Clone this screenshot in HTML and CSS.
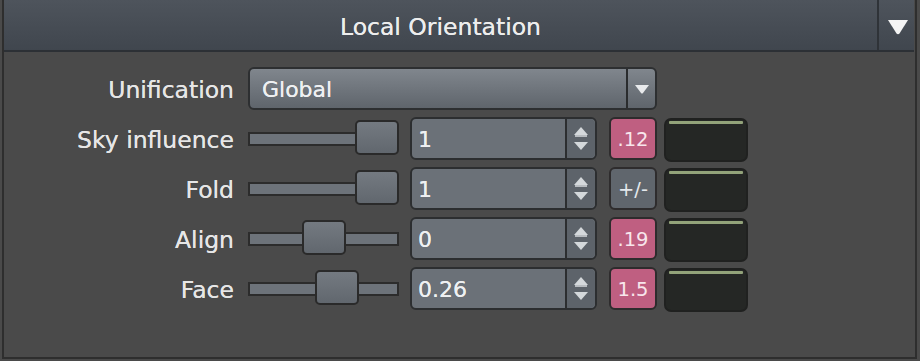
FILE: index.html
```html
<!DOCTYPE html>
<html>
<head>
<meta charset="utf-8">
<link rel="stylesheet" href="styles.css">
</head>
<body>
<div class="panel">
  <div class="header">
    <div class="title">Local Orientation</div>
    <div class="hdr-arrow"><svg width="22" height="16" viewBox="0 0 22 16"><path d="M1 1 H21 L12.5 14.5 Q11 16 9.5 14.5 Z" fill="#f4f4f4"/></svg></div>
  </div>
  <div class="rows">
    <div class="row">
      <div class="label">Unification</div>
      <div class="dropdown">
        <div class="dd-value">Global</div>
        <div class="dd-arrow"><svg width="16" height="10" viewBox="0 0 16 10"><path d="M1 1 H15 L9 9 Q8 10 7 9 Z" fill="#e8eaec"/></svg></div>
      </div>
    </div>

    <div class="row">
      <div class="label">Sky influence</div>
      <div class="controls">
        <div class="slider"><div class="track"></div><div class="handle" style="left:107px"></div></div>
        <div class="num"><div class="num-value">1</div><div class="spin"><span class="up"></span><span class="dn"></span></div></div>
        <div class="btn pink">.12</div>
        <div class="swatch"><div class="swatch-line"></div></div>
      </div>
    </div>

    <div class="row">
      <div class="label">Fold</div>
      <div class="controls">
        <div class="slider"><div class="track"></div><div class="handle" style="left:107px"></div></div>
        <div class="num"><div class="num-value">1</div><div class="spin"><span class="up"></span><span class="dn"></span></div></div>
        <div class="btn grey">+/-</div>
        <div class="swatch"><div class="swatch-line"></div></div>
      </div>
    </div>

    <div class="row">
      <div class="label">Align</div>
      <div class="controls">
        <div class="slider"><div class="track"></div><div class="handle" style="left:54px"></div></div>
        <div class="num"><div class="num-value">0</div><div class="spin"><span class="up"></span><span class="dn"></span></div></div>
        <div class="btn pink">.19</div>
        <div class="swatch"><div class="swatch-line"></div></div>
      </div>
    </div>

    <div class="row">
      <div class="label">Face</div>
      <div class="controls">
        <div class="slider"><div class="track"></div><div class="handle" style="left:67px"></div></div>
        <div class="num"><div class="num-value">0.26</div><div class="spin"><span class="up"></span><span class="dn"></span></div></div>
        <div class="btn pink">1.5</div>
        <div class="swatch"><div class="swatch-line"></div></div>
      </div>
    </div>
  </div>
</div>
</body>
</html>
```

FILE: styles.css
```css
html, body {
  margin: 0;
  padding: 0;
  background: #4a4a4a;
  width: 920px;
  height: 361px;
  overflow: hidden;
  font-family: "DejaVu Sans", sans-serif;
}

.panel {
  margin-left: 2px;
  width: 911px;
  height: 357px;
  border-left: 2px solid #2e2e2e;
  border-right: 2px solid #2e2e2e;
  border-bottom: 2px solid #2e2e2e;
  background: #4a4a4a;
  display: flex;
  flex-direction: column;
}

.header {
  height: 50px;
  width: 910px;
  border-bottom: 2px solid #2c3035;
  background: linear-gradient(#4e545c, #40464e);
  display: flex;
}

.title {
  flex: 1;
  display: flex;
  align-items: center;
  justify-content: center;
  color: #ededed;
  font-size: 23.5px;
  padding-top: 4px;
  border-right: 2px solid #2f3338;
  text-shadow: 0 0 0.6px #ededed;
}

.hdr-arrow {
  width: 32px;
  display: flex;
  align-items: center;
  justify-content: center;
  padding-top: 3px;
  padding-left: 3px;
}

.rows {
  padding-top: 15px;
  display: flex;
  flex-direction: column;
  gap: 7px;
}

.row {
  display: flex;
  align-items: center;
  height: 43px;
  gap: 14px;
}

.label {
  width: 230px;
  text-align: right;
  color: #e6e6e6;
  font-size: 23.5px;
  padding-top: 2px;
  text-shadow: 0 0 0.6px #e6e6e6;
}

.dropdown {
  width: 409px;
  height: 43px;
  box-sizing: border-box;
  border: 2px solid #2d2f31;
  border-radius: 6px;
  background: linear-gradient(#80868d, #5f656c);
  display: flex;
}

.dd-value {
  flex: 1;
  color: #eef0f2;
  font-size: 22px;
  padding-left: 12px;
  display: flex;
  align-items: center;
  padding-top: 1px;
  border-right: 2px solid #2a2c2e;
  text-shadow: 0 0 0.6px #eef0f2;
}

.dd-arrow {
  width: 27px;
  display: flex;
  align-items: center;
  justify-content: center;
}

.controls {
  display: flex;
  align-items: center;
  height: 43px;
}

.slider {
  position: relative;
  width: 151px;
  height: 43px;
  display: flex;
  align-items: center;
}

.track {
  width: 151px;
  height: 14px;
  box-sizing: border-box;
  border: 2px solid #2c2c2c;
  background: #6d737a;
}

.handle {
  position: absolute;
  top: 3px;
  width: 44px;
  height: 35px;
  box-sizing: border-box;
  border: 2px solid #2a2a2a;
  border-radius: 5px;
  background: linear-gradient(#747a81, #61676e);
}

.num {
  margin-left: 11px;
  width: 187px;
  height: 43px;
  box-sizing: border-box;
  border: 2px solid #2c2e30;
  border-radius: 6px;
  background: #6b7178;
  display: flex;
}

.num-value {
  flex: 1;
  color: #eef0f2;
  font-size: 22px;
  padding-left: 6px;
  display: flex;
  align-items: center;
  padding-top: 1px;
  border-right: 2px solid #2c2e30;
  text-shadow: 0 0 0.6px #eef0f2;
}

.spin {
  width: 28px;
  background: #5d636a;
  border-radius: 0 5px 5px 0;
  display: flex;
  flex-direction: column;
  align-items: center;
  justify-content: center;
  gap: 7px;
}

.up, .dn {
  width: 0;
  height: 0;
  border-left: 7px solid transparent;
  border-right: 7px solid transparent;
}

.up {
  border-bottom: 8px solid #d4d8db;
  box-shadow: 0 3px 0 -1px #b8bcc0;
}

.dn {
  border-top: 8px solid #d4d8db;
}

.btn {
  margin-left: 12px;
  width: 48px;
  height: 43px;
  box-sizing: border-box;
  border: 2px solid #2e2c2d;
  border-radius: 6px;
  display: flex;
  align-items: center;
  justify-content: center;
  font-size: 19.5px;
  padding-top: 1px;
}

.pink {
  background: #bf5f81;
  color: #f8e6ec;
}

.grey {
  background: #60666d;
  color: #e4e8ec;
}

.swatch {
  margin-left: 7px;
  width: 84px;
  height: 44px;
  margin-top: 2px;
  box-sizing: border-box;
  border: 2px solid #202120;
  border-radius: 7px;
  background: #252725;
  padding: 1px 3px 0;
}

.swatch-line {
  height: 3px;
  background: #93a37a;
  border-radius: 1px;
}
```
